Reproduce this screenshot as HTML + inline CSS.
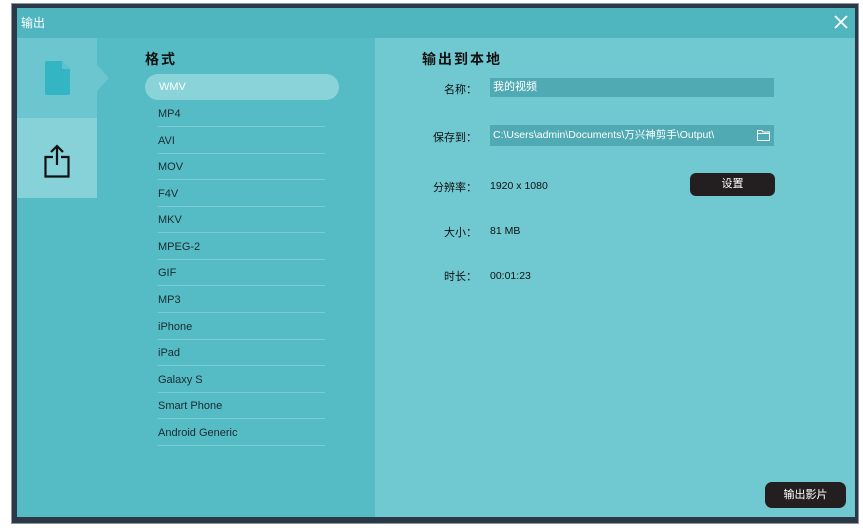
<!DOCTYPE html>
<html><head><meta charset="utf-8"><style>
*{margin:0;padding:0;box-sizing:border-box}
body{width:863px;height:530px;background:#fff;position:relative;overflow:hidden;font-family:"Liberation Sans","Noto Sans CJK SC",sans-serif}
.frame{position:absolute;left:11px;top:3px;width:848px;height:521px;background:#2b3946;border:1px solid #8a96a0}
.win{position:absolute;left:17px;top:8px;width:838px;height:509px;background:#55bcc6}
.title{position:absolute;left:0;top:0;width:838px;height:30px;background:#4fb5bf;color:#fff;font-size:12px;line-height:30px;padding-left:4px}
.close{position:absolute;right:4px;top:4px;width:20px;height:20px}
.side1{position:absolute;left:0;top:30px;width:80px;height:80px;background:#6cc6cf}
.side2{position:absolute;left:0;top:110px;width:80px;height:80px;background:#86d2d8}
.arrow{position:absolute;left:80px;top:57px;width:0;height:0;border-top:13px solid transparent;border-bottom:13px solid transparent;border-left:12px solid #6cc6cf}
.right{position:absolute;left:358px;top:30px;width:480px;height:479px;background:#70c8d0}
.h{position:absolute;font-weight:bold;font-size:14px;color:#111;letter-spacing:2px}
.item{position:absolute;left:141px;width:167px;height:27px;font-size:11px;color:#1a2a2e;line-height:28px;border-bottom:1px solid #7cccd3}
.pill{position:absolute;left:128px;top:66px;width:194px;height:26px;border-radius:13px;background:#8ad3d9;color:#fff;font-size:11px;line-height:26px;padding-left:14px}
.lab{position:absolute;font-size:11px;color:#111;text-align:right;width:80px}
.val{position:absolute;font-size:10.5px;color:#111}
.box{position:absolute;background:#4faab3;color:#fff;font-size:11px;line-height:19px;padding-left:3px}
.btn{position:absolute;background:#231f20;color:#fff;font-size:11px;text-align:center;border-radius:6px}
</style></head><body>
<div class="frame"></div>
<div class="win">
<div class="title">输出
<svg class="close" viewBox="0 0 20 20"><path d="M4 4L16 16M16 4L4 16" stroke="#fff" stroke-width="1.8"/></svg></div>
<div class="side1"><svg style="position:absolute;left:28px;top:23px" width="25" height="34" viewBox="0 0 25 34"><path d="M2 0H17L25 8V32Q25 34 23 34H2Q0 34 0 32V2Q0 0 2 0Z" fill="#33b5c3"/><path d="M17 0V8H25Z" fill="#5cc3cd"/></svg></div>
<div class="arrow"></div>
<div class="side2"><svg style="position:absolute;left:27px;top:26px" width="26" height="34" viewBox="0 0 26 34"><path d="M13 2V21M7 8L13 2L19 8M9 13H1.5V32.5H24.5V13H17" fill="none" stroke="#111" stroke-width="2.2"/></svg></div>
<div class="h" style="left:128px;top:41px">格式</div>
<div class="pill">WMV</div>
<div class="item" style="top:92px">MP4</div>
<div class="item" style="top:119px">AVI</div>
<div class="item" style="top:145px">MOV</div>
<div class="item" style="top:172px">F4V</div>
<div class="item" style="top:198px">MKV</div>
<div class="item" style="top:225px">MPEG-2</div>
<div class="item" style="top:251px">GIF</div>
<div class="item" style="top:278px">MP3</div>
<div class="item" style="top:305px">iPhone</div>
<div class="item" style="top:331px">iPad</div>
<div class="item" style="top:358px">Galaxy S</div>
<div class="item" style="top:384px">Smart Phone</div>
<div class="item" style="top:411px">Android Generic</div>
<div class="right">
<div class="h" style="left:47px;top:11px">输出到本地</div>
<div class="lab" style="left:22px;top:43px">名称：</div>
<div class="box" style="left:115px;top:40px;width:284px;height:19px">我的视频</div>
<div class="lab" style="left:22px;top:91px">保存到：</div>
<div class="box" style="left:115px;top:87px;width:284px;height:21px;line-height:21px;font-size:10.5px">C:\Users\admin\Documents\万兴神剪手\Output\
<svg style="position:absolute;right:4px;top:5px" width="13" height="11" viewBox="0 0 13 11"><path d="M0.5 0.5H5L6 2H12.5V10.5H0.5Z M0.5 3.5H12.5" fill="none" stroke="#fff"/></svg></div>
<div class="lab" style="left:22px;top:141px">分辨率：</div>
<div class="val" style="left:115px;top:142px">1920 x 1080</div>
<div class="btn" style="left:315px;top:135px;width:85px;height:23px;line-height:23px">设置</div>
<div class="lab" style="left:22px;top:186px">大小：</div>
<div class="val" style="left:115px;top:187px">81 MB</div>
<div class="lab" style="left:22px;top:230px">时长：</div>
<div class="val" style="left:115px;top:232px">00:01:23</div>
<div class="btn" style="left:390px;top:444px;width:81px;height:26px;line-height:26px;border-radius:7px">输出影片</div>
</div>
</div>
</body></html>
